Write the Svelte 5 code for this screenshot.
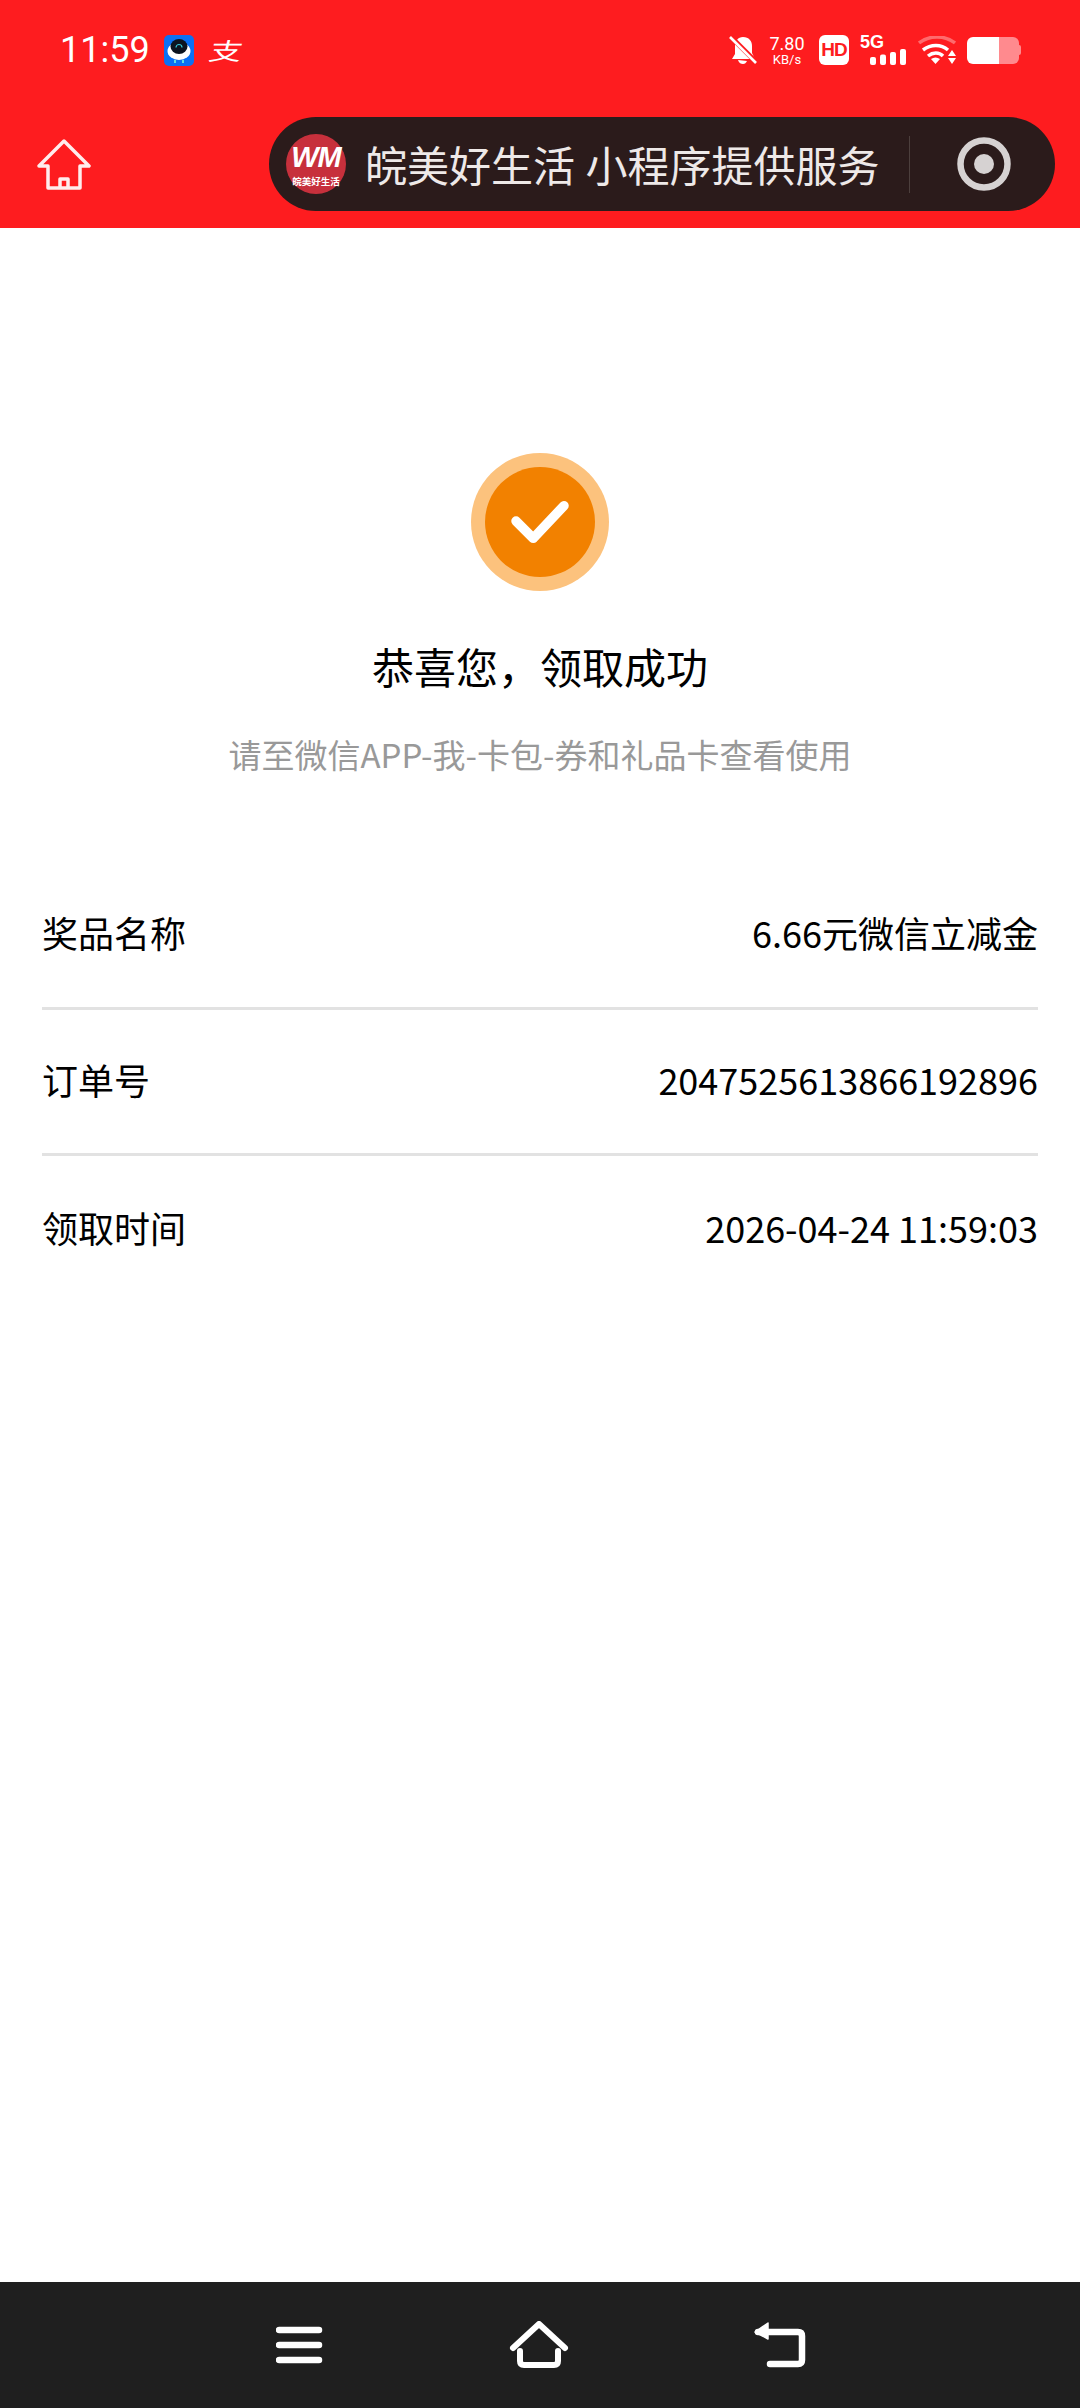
<script>
  // rows under the success message
  const rows = [
    { label: "奖品名称", value: "6.66元微信立减金" },
    { label: "订单号", value: "2047525613866192896" },
    { label: "领取时间", value: "2026-04-24 11:59:03" }
  ];
</script>

<div class="page">
  <header class="top">
    <div class="status">
      <span class="time">11:59</span>
      <svg class="bot" width="30" height="31" viewBox="0 0 30 31">
        <rect width="30" height="31" rx="5" fill="#0b70f4" />
        <ellipse cx="15" cy="16" rx="11.5" ry="9" fill="#fff" />
        <ellipse cx="15" cy="11.5" rx="8.5" ry="7.5" fill="#0c1420" />
        <path d="M12 12.5a3 3 0 0 1 6 0" fill="none" stroke="#35c8d8" stroke-width="1.2" />
        <path d="M11 25v3M19 25v3" stroke="#5fe0e0" stroke-width="2" />
      </svg>
      <span class="zhi">支</span>

      <div class="status-right">
        <svg class="bell" width="28" height="30" viewBox="0 0 28 30">
          <path d="M14 2c6 0 9 4 9 9v7l3 6H6L3 24l3-5v-8c0-5 3-9 8-9z" fill="#fff" />
          <path d="M9 25c1 3 3 4 5 4s3-1 4-3z" fill="#fff" />
          <path d="M0 0l28 28" stroke="#fe1c1f" stroke-width="5" />
          <path d="M1 2l26 26" stroke="#fff" stroke-width="2.6" />
        </svg>
        <div class="speed"><span class="num">7.80</span><span class="unit">KB/s</span></div>
        <span class="hd">HD</span>
        <div class="signal">
          <span class="five">5G</span>
          <svg width="36" height="16" viewBox="0 0 36 16">
            <rect x="0" y="8" width="6" height="8" rx="2" fill="#fff" />
            <rect x="10" y="5.500" width="6" height="10.500" rx="2" fill="#fff" />
            <rect x="20" y="3" width="6" height="13" rx="2" fill="#fff" />
            <rect x="30" y="0" width="6" height="16" rx="2" fill="#fff" />
          </svg>
        </div>
        <svg class="wifi" width="38" height="28" viewBox="0 0 38 28">
          <path d="M1 7c10-8 26-8 36 0" fill="none" stroke="#fff" stroke-opacity=".35" stroke-width="3.500" />
          <path d="M5 14c8-6 18-6 25 0" fill="none" stroke="#fff" stroke-width="3.500" />
          <path d="M10 20c5-4 11-4 15 0" fill="none" stroke="#fff" stroke-width="3.500" />
          <path d="M13 23c3-2 6-2 9 0l-4.500 5z" fill="#fff" />
          <path d="M34 14l4 6h-8zM30 22h8l-4 6z" fill="#fff" />
        </svg>
        <div class="battery"><span class="level"></span><span class="nub"></span></div>
      </div>
    </div>

    <nav class="title-bar">
      <svg class="home" width="54" height="52" viewBox="0 0 54 52">
        <path d="M2 27L27 2l25 25H43V49H11V27zM23 49V40h8v9" fill="none" stroke="#fff" stroke-opacity=".92" stroke-width="3.500" stroke-linejoin="round" stroke-linecap="round" />
      </svg>
      <div class="capsule">
        <div class="logo">
          <span class="wm">WM</span>
          <span class="wm-sub">皖美好生活</span>
        </div>
        <span class="capsule-text">皖美好生活 小程序提供服务</span>
        <span class="divider"></span>
        <svg class="record" width="54" height="54" viewBox="0 0 54 54">
          <circle cx="27" cy="27" r="23.500" fill="none" stroke="#d6d2d2" stroke-width="6.500" />
          <circle cx="27" cy="27" r="10" fill="#d6d2d2" />
        </svg>
      </div>
    </nav>
  </header>

  <main class="content">
    <div class="result">
      <div class="ring">
        <div class="disc">
          <svg width="60" height="46" viewBox="0 0 62 48">
            <path d="M6 23l18 18L56 7" fill="none" stroke="#fff" stroke-width="10" stroke-linecap="round" stroke-linejoin="round" />
          </svg>
        </div>
      </div>
      <h1>恭喜您，领取成功</h1>
      <p>请至微信APP-我-卡包-券和礼品卡查看使用</p>
    </div>

    <section class="details">
      {#each rows as row}
        <div class="row">
          <span>{row.label}</span>
          <span>{row.value}</span>
        </div>
      {/each}
    </section>
  </main>

  <footer class="nav">
    <svg width="48" height="40" viewBox="0 0 48 40">
      <path d="M3 5h40M3 20h40M3 35h40" stroke="#fff" stroke-width="6.500" stroke-linecap="round" />
    </svg>
    <svg width="60" height="48" viewBox="0 0 60 48">
      <path d="M4 27L30 3l26 24" fill="none" stroke="#fff" stroke-width="6" stroke-linecap="round" stroke-linejoin="round" />
      <path d="M11 30v10q0 4 4 4h30q4 0 4-4V30" fill="none" stroke="#fff" stroke-width="6" stroke-linecap="round" />
    </svg>
    <svg width="52" height="46" viewBox="0 0 52 46">
      <path d="M4 10h40q4 0 4 4v24q0 4-4 4H16" fill="none" stroke="#fff" stroke-width="6.500" stroke-linecap="round" />
      <path d="M1 10L14 1v16z" fill="#fff" stroke="#fff" stroke-width="1.500" stroke-linejoin="round" />
    </svg>
  </footer>
</div>

<style>
  :global(body) {
    background: #fff;
  }

  .page {
    width: 1080px;
    height: 2408px;
    display: flex;
    flex-direction: column;
    font-family: "Noto Sans CJK SC", "Noto Sans", sans-serif;
  }

  .top {
    height: 228px;
    background: #fe1c1f;
    color: #fff;
  }

  .status {
    height: 100px;
    display: flex;
    align-items: center;
    padding: 0 59px 0 60px;
  }

  .time {
    font-family: Roboto, sans-serif;
    font-size: 36px;
    line-height: 1;
    width: 104px;
  }

  .zhi {
    margin-left: 16px;
    font-size: 33px;
    line-height: 1;
    transform: skewX(-14deg) scaleY(0.72);
  }

  .status-right {
    margin-left: auto;
    display: flex;
    align-items: center;
  }

  .speed {
    display: flex;
    flex-direction: column;
    align-items: center;
    width: 38px;
    margin-left: 11px;
    font-family: Roboto, sans-serif;
    line-height: 1;
  }

  .num {
    font-size: 18px;
  }

  .unit {
    font-size: 13px;
  }

  .hd {
    width: 30px;
    height: 30px;
    margin-left: 13px;
    border-radius: 6px;
    background: #fff;
    color: #fe1c1f;
    font-family: "Liberation Sans", sans-serif;
    font-size: 19px;
    font-weight: 700;
    line-height: 30px;
    text-align: center;
    letter-spacing: -1px;
  }

  .signal {
    position: relative;
    width: 46px;
    height: 30px;
    margin-left: 11px;
  }

  .five {
    position: absolute;
    left: 0;
    top: -2px;
    font-family: "Liberation Sans", sans-serif;
    font-size: 18px;
    font-weight: 700;
    line-height: 1;
  }

  .signal svg {
    position: absolute;
    right: 0;
    bottom: 0;
  }

  .wifi {
    margin-left: 12px;
  }

  .battery {
    display: flex;
    align-items: center;
    margin-left: 11px;
  }

  .level {
    width: 52px;
    height: 27px;
    border-radius: 6px;
    background: linear-gradient(90deg, #fff 62%, #ff8a8e 62%);
  }

  .nub {
    width: 2px;
    height: 10px;
    border-radius: 0 2px 2px 0;
    background: #ff8a8e;
  }

  .title-bar {
    height: 128px;
    display: flex;
    align-items: center;
    padding: 0 25px 18px 37px;
  }

  .home {
    margin-top: 2px;
  }

  .capsule {
    margin-left: auto;
    width: 786px;
    height: 94px;
    display: flex;
    align-items: center;
    padding-left: 17px;
    border-radius: 47px;
    background: #2b1b1b;
    box-sizing: border-box;
  }

  .logo {
    width: 60px;
    height: 60px;
    flex: none;
    display: flex;
    flex-direction: column;
    align-items: center;
    justify-content: center;
    border-radius: 50%;
    background: #c7303c;
    color: #fff;
  }

  .wm {
    font-family: "Liberation Sans", sans-serif;
    font-size: 29px;
    font-style: italic;
    font-weight: 700;
    letter-spacing: -1px;
    line-height: normal;
  }

  .wm-sub {
    font-size: 9.500px;
    font-weight: 700;
    white-space: nowrap;
    line-height: normal;
  }

  .capsule-text {
    margin-left: 19px;
    width: 544px;
    flex: none;
    font-size: 42px;
    line-height: 1;
    color: #eee9e8;
    white-space: nowrap;
    word-spacing: 1px;
  }

  .divider {
    width: 1px;
    height: 57px;
    background: #4c3f3d;
  }

  .record {
    margin-left: 47px;
  }

  .content {
    flex: 1;
  }

  .result {
    padding-top: 225px;
    display: flex;
    flex-direction: column;
    align-items: center;
  }

  .ring {
    width: 138px;
    height: 138px;
    display: flex;
    align-items: center;
    justify-content: center;
    border-radius: 50%;
    background: #fcc27d;
  }

  .disc {
    width: 110px;
    height: 110px;
    display: flex;
    align-items: center;
    justify-content: center;
    border-radius: 50%;
    background: #f28100;
  }

  h1 {
    margin: 45px 0 0;
    font-size: 42px;
    font-weight: 400;
    line-height: 60px;
    color: #000;
  }

  p {
    margin: 35px 0 0;
    font-size: 33px;
    line-height: 46px;
    color: #999;
  }

  .details {
    margin: 86px 42px 0;
  }

  .row {
    height: 146.500px;
    padding-bottom: 5px;
    display: flex;
    align-items: center;
    justify-content: space-between;
    box-sizing: border-box;
    border-bottom: 3px solid #e2e2e2;
    font-size: 36px;
    color: #000;
  }

  .row:last-child {
    border-bottom: none;
  }

  .nav {
    height: 126px;
    display: flex;
    align-items: center;
    justify-content: space-between;
    padding: 0 274px 0 276px;
    background: #1f1f1f;
  }
</style>
